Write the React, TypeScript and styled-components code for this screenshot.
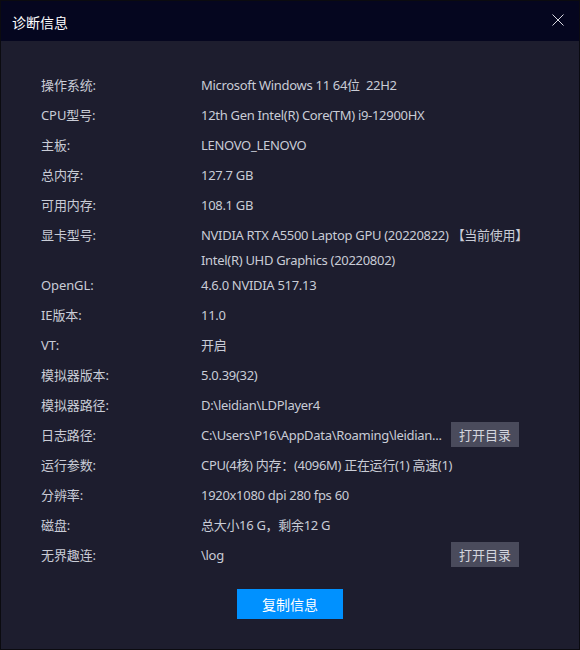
import React from "react";
import styled, { createGlobalStyle } from "styled-components";

interface InfoRow {
    label: string;
    values: string[];
    action?: string;
}

const rows: InfoRow[] = [
    { label: "操作系统:", values: ["Microsoft Windows 11 64位  22H2"] },
    { label: "CPU型号:", values: ["12th Gen Intel(R) Core(TM) i9-12900HX"] },
    { label: "主板:", values: ["LENOVO_LENOVO"] },
    { label: "总内存:", values: ["127.7 GB"] },
    { label: "可用内存:", values: ["108.1 GB"] },
    {
        label: "显卡型号:",
        values: ["NVIDIA RTX A5500 Laptop GPU (20220822) 【当前使用】", "Intel(R) UHD Graphics (20220802)"],
    },
    { label: "OpenGL:", values: ["4.6.0 NVIDIA 517.13"] },
    { label: "IE版本:", values: ["11.0"] },
    { label: "VT:", values: ["开启"] },
    { label: "模拟器版本:", values: ["5.0.39(32)"] },
    { label: "模拟器路径:", values: ["D:\\leidian\\LDPlayer4"] },
    { label: "日志路径:", values: ["C:\\Users\\P16\\AppData\\Roaming\\leidian..."], action: "打开目录" },
    { label: "运行参数:", values: ["CPU(4核) 内存：(4096M) 正在运行(1) 高速(1)"] },
    { label: "分辨率:", values: ["1920x1080 dpi 280 fps 60"] },
    { label: "磁盘:", values: ["总大小16 G，剩余12 G"] },
    { label: "无界趣连:", values: ["\\log"], action: "打开目录" },
];

const GlobalStyle = createGlobalStyle`
    html, body {
        margin: 0;
        padding: 0;
        background: #0b0b10;
    }
    body {
        font-family: "Noto Sans", "Noto Sans CJK SC", sans-serif;
    }
`;

const Window = styled.div`
    width: 578px;
    height: 648px;
    border: 1px solid #0b0b10;
    background-color: #1d1d2e;
    display: flex;
    flex-direction: column;
`;

const Header = styled.div`
    height: 40px;
    background-color: #05061f;
    display: flex;
    align-items: center;
    justify-content: space-between;
    padding: 0 11px 0 11px;
`;

const Title = styled.div`
    color: #ffffff;
    font-size: 14px;
    padding-top: 1px;
`;

const CloseButton = styled.button`
    width: 20px;
    height: 20px;
    padding: 0;
    border: none;
    background: transparent;
    display: flex;
    align-items: center;
    justify-content: center;
    margin-top: -3px;
    cursor: pointer;
`;

const Body = styled.div`
    flex: 1;
    padding: 29px 60px 0 40px;
    display: flex;
    flex-direction: column;
`;

const Row = styled.div`
    display: flex;
    align-items: flex-start;
    font-size: 13px;
    color: #c9ccd6;
`;

const Label = styled.div`
    width: 160px;
    flex-shrink: 0;
    line-height: 30px;
    letter-spacing: -0.1px;
`;

const Values = styled.div`
    flex: 1;
    display: flex;
    flex-direction: column;
    min-width: 0;
`;

const Line = styled.div<{ $extra?: boolean }>`
    line-height: ${(p) => (p.$extra ? "20px" : "30px")};
    letter-spacing: -0.3px;
    white-space: pre;
`;

const ActionButton = styled.button`
    margin-top: 2px;
    width: 68px;
    height: 25px;
    border: none;
    background-color: #4a4b5c;
    color: #d4d6de;
    font-family: inherit;
    font-size: 13px;
    padding: 0;
    flex-shrink: 0;
    cursor: pointer;
`;

const Footer = styled.div`
    display: flex;
    justify-content: center;
    padding-top: 19px;
    margin: 0 -60px 0 -40px;
`;

const CopyButton = styled.button`
    width: 106px;
    height: 30px;
    border: none;
    background-color: #0091ff;
    color: #ffffff;
    font-family: inherit;
    font-size: 14px;
    cursor: pointer;
`;

const App: React.FC = () => {
    return (
        <>
            <GlobalStyle />
            <Window>
                <Header>
                    <Title>诊断信息</Title>
                    <CloseButton aria-label="关闭">
                        <svg width="12" height="12" viewBox="0 0 12 12">
                            <path d="M0.5 0.5 L11.5 11.5 M11.5 0.5 L0.5 11.5" stroke="#d8d8e0" strokeWidth="1" fill="none" />
                        </svg>
                    </CloseButton>
                </Header>
                <Body>
                    {rows.map((row, index) => (
                        <Row key={index}>
                            <Label>{row.label}</Label>
                            <Values>
                                {row.values.map((v, i) => (
                                    <Line key={i} $extra={i > 0}>
                                        {v}
                                    </Line>
                                ))}
                            </Values>
                            {row.action && <ActionButton>{row.action}</ActionButton>}
                        </Row>
                    ))}
                    <Footer>
                        <CopyButton>复制信息</CopyButton>
                    </Footer>
                </Body>
            </Window>
        </>
    );
};

export default App;
